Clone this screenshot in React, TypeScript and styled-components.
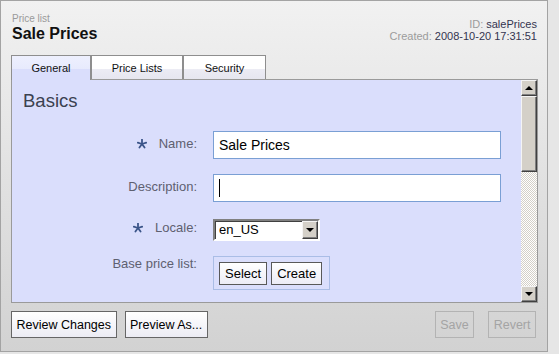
import * as React from "react";
import styled, { createGlobalStyle } from "styled-components";

const GlobalStyle = createGlobalStyle`
    html, body {
        margin: 0;
        padding: 0;
    }
    body {
        background: #e6e6e6;
        font-family: "Liberation Sans", Arial, sans-serif;
        width: 559px;
        height: 354px;
        overflow: hidden;
    }
`;

const Window = styled.div`
    width: 548px;
    height: 352px;
    box-sizing: border-box;
    border: 1px solid #a3a3a3;
    background: linear-gradient(#f1f1f1, #d2d2d2);
    display: flex;
    flex-direction: column;
`;

const Header = styled.div`
    display: flex;
    justify-content: space-between;
    align-items: flex-end;
    padding: 12px 10px 0 11px;
`;

const Kicker = styled.div`
    font-size: 10px;
    line-height: 12px;
    color: #9a9a9a;
`;

const Title = styled.div`
    font-size: 16px;
    line-height: 17px;
    font-weight: bold;
    color: #111;
`;

const Meta = styled.div`
    font-size: 11px;
    line-height: 12px;
    text-align: right;
    color: #9c9c9c;
`;

const MetaValue = styled.span`
    color: #34344f;
`;

const TabRow = styled.div`
    display: flex;
    align-items: flex-end;
    margin-top: 13px;
    padding-left: 10px;
`;

const Tab = styled.div<{ $active?: boolean; $width: number }>`
    width: ${p => p.$width}px;
    height: ${p => (p.$active ? 24 : 23)}px;
    box-sizing: content-box;
    border: 1px solid #8e8e8e;
    border-bottom: none;
    margin-bottom: ${p => (p.$active ? -1 : 0)}px;
    position: relative;
    z-index: ${p => (p.$active ? 1 : 0)};
    font-size: 11px;
    line-height: 25px;
    text-align: center;
    color: #111;
    background: ${p =>
        p.$active
            ? "linear-gradient(#eef0fe 0%, #e7eafd 55%, #dadefc 56%, #dadefc 100%)"
            : "linear-gradient(#ffffff 0%, #ffffff 55%, #ececf4 56%, #e6e6ef 100%)"};
`;

const Panel = styled.div`
    margin: 0 9px 0 10px;
    height: 224px;
    box-sizing: border-box;
    border: 1px solid #9a9a9a;
    background: #dadefc;
    display: flex;
`;

const Content = styled.div`
    flex: 1;
    padding-top: 10px;
`;

const Heading = styled.h2`
    margin: 0;
    padding-left: 11px;
    font-size: 18.5px;
    line-height: 22px;
    font-weight: normal;
    color: #3b4150;
`;

const FormGrid = styled.div`
    margin-top: 19px;
    display: grid;
    grid-template-columns: 185px 288px;
    column-gap: 16px;
    row-gap: 15px;
    align-items: center;
`;

const Label = styled.div<{ $top?: boolean }>`
    display: flex;
    justify-content: flex-end;
    align-items: center;
    gap: 12px;
    align-self: ${p => (p.$top ? "start" : "center")};
    margin-top: ${p => (p.$top ? "0" : "-2px")};
    font-size: 13px;
    line-height: 16px;
    color: #5e6070;
`;

const Star = () => (
    <svg width="10" height="10" viewBox="-5 -5 10 10">
        {[-90, -18, 54, 126, 198].map(a => (
            <line
                key={a}
                x1="0"
                y1="0"
                x2={4.4 * Math.cos((a * Math.PI) / 180)}
                y2={4.4 * Math.sin((a * Math.PI) / 180)}
                stroke="#3b5589"
                strokeWidth="1.8"
                strokeLinecap="round"
            />
        ))}
    </svg>
);

const TextInput = styled.input`
    width: 288px;
    height: 28px;
    box-sizing: border-box;
    border: 1px solid #7a9fd4;
    padding: 0 5px;
    margin: 0;
    background: #fff;
    font-family: "Liberation Sans", Arial, sans-serif;
    font-size: 14px;
    color: #000;
    outline: none;
`;

const FieldWrap = styled.div`
    position: relative;
    width: 288px;
`;

const Caret = styled.span`
    position: absolute;
    left: 6px;
    top: 5px;
    width: 1px;
    height: 18px;
    background: #000;
`;

const FakeSelect = styled.div`
    width: 107px;
    height: 22px;
    margin-top: 2px;
    box-sizing: border-box;
    border: 2px solid;
    border-color: #808080 #ffffff #ffffff #808080;
    box-shadow: inset 1px 1px #404040;
    background: #fff;
    display: flex;
    align-items: stretch;
`;

const SelectText = styled.div`
    flex: 1;
    padding-left: 4px;
    font-size: 13px;
    line-height: 18px;
    color: #000;
`;

const Raised = styled.div`
    box-sizing: border-box;
    background: #d4d0c8;
    border: 1px solid;
    border-color: #f4f4f4 #404040 #404040 #f4f4f4;
    box-shadow: inset -1px -1px #808080;
    display: flex;
    align-items: center;
    justify-content: center;
`;

const DropButton = styled(Raised)`
    width: 16px;
`;

const Arrow = styled.span<{ $up?: boolean }>`
    width: 0;
    height: 0;
    border-left: 4px solid transparent;
    border-right: 4px solid transparent;
    ${p => (p.$up ? "border-bottom: 4px solid #000;" : "border-top: 4px solid #000;")}
`;

const ChooserBox = styled.div`
    justify-self: start;
    display: flex;
    gap: 4px;
    padding: 5px 7px 4px 5px;
    border: 1px solid #aabde6;
`;

const SmallButton = styled.button`
    height: 23px;
    padding: 0 5px;
    margin: 0;
    border: 1px solid #595959;
    border-radius: 0;
    background: linear-gradient(#ffffff, #ececf6);
    font-family: "Liberation Sans", Arial, sans-serif;
    font-size: 13px;
    color: #000;
`;

const ScrollBar = styled.div`
    width: 16px;
    display: flex;
    flex-direction: column;
`;

const ScrollButton = styled(Raised)`
    height: 16px;
`;

const Thumb = styled(Raised)`
    height: 76px;
`;

const Track = styled.div`
    flex: 1;
    background: repeating-conic-gradient(#d4d0c8 0 25%, #ffffff 0 50%) 0 0 / 2px 2px;
`;

const Footer = styled.div`
    display: flex;
    align-items: center;
    gap: 8px;
    padding: 8px 11px 0 10px;
`;

const RightGroup = styled.div`
    margin-left: auto;
    display: flex;
    gap: 14px;
`;

const FootButton = styled.button<{ $disabled?: boolean }>`
    height: 27px;
    padding: 0 4.5px;
    margin: 0;
    border: 1px solid ${p => (p.$disabled ? "#b3b3b3" : "#666")};
    border-radius: 0;
    background: ${p => (p.$disabled ? "transparent" : "linear-gradient(#ffffff, #ececf4)")};
    font-family: "Liberation Sans", Arial, sans-serif;
    font-size: 12.5px;
    color: ${p => (p.$disabled ? "#a4a4a4" : "#000")};
`;

export default function App() {
    return (
        <>
            <GlobalStyle />
            <Window>
                <Header>
                    <div>
                        <Kicker>Price list</Kicker>
                        <Title>Sale Prices</Title>
                    </div>
                    <Meta>
                        <div>
                            ID: <MetaValue>salePrices</MetaValue>
                        </div>
                        <div>
                            Created: <MetaValue>2008-10-20 17:31:51</MetaValue>
                        </div>
                    </Meta>
                </Header>
                <TabRow>
                    <Tab $active $width={78}>General</Tab>
                    <Tab $width={90}>Price Lists</Tab>
                    <Tab $width={81}>Security</Tab>
                </TabRow>
                <Panel>
                    <Content>
                        <Heading>Basics</Heading>
                        <FormGrid>
                            <Label>
                                <Star />
                                <span>Name:</span>
                            </Label>
                            <TextInput defaultValue="Sale Prices" />
                            <Label>Description:</Label>
                            <FieldWrap>
                                <TextInput defaultValue="" />
                                <Caret />
                            </FieldWrap>
                            <Label>
                                <Star />
                                <span>Locale:</span>
                            </Label>
                            <FakeSelect>
                                <SelectText>en_US</SelectText>
                                <DropButton>
                                    <Arrow />
                                </DropButton>
                            </FakeSelect>
                            <Label $top>Base price list:</Label>
                            <ChooserBox>
                                <SmallButton>Select</SmallButton>
                                <SmallButton>Create</SmallButton>
                            </ChooserBox>
                        </FormGrid>
                    </Content>
                    <ScrollBar>
                        <ScrollButton>
                            <Arrow $up />
                        </ScrollButton>
                        <Thumb />
                        <Track />
                        <ScrollButton>
                            <Arrow />
                        </ScrollButton>
                    </ScrollBar>
                </Panel>
                <Footer>
                    <FootButton>Review Changes</FootButton>
                    <FootButton>Preview As...</FootButton>
                    <RightGroup>
                        <FootButton $disabled>Save</FootButton>
                        <FootButton $disabled>Revert</FootButton>
                    </RightGroup>
                </Footer>
            </Window>
        </>
    );
}
